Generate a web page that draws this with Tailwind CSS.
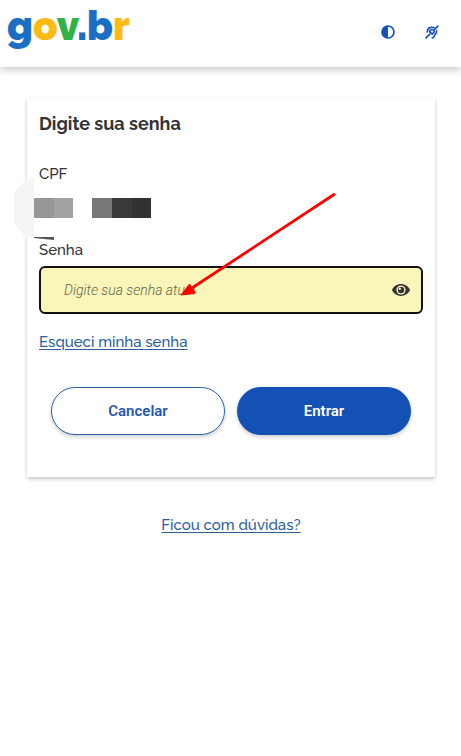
<!DOCTYPE html>
<html lang="pt-BR">
  <head>
    <meta charset="UTF-8" />
    <meta name="viewport" content="width=device-width, initial-scale=1.0" />
    <title>gov.br - Digite sua senha</title>
    <script src="https://cdn.jsdelivr.net/npm/@tailwindcss/browser@4"></script>
  </head>
  <body class="min-h-screen bg-white font-[Raleway,Lato,sans-serif] text-[#333]">
    <!-- Cabeçalho -->
    <header class="flex h-[67px] items-start justify-between bg-white pl-[7px] pr-[19px] shadow-[0_2px_8px_rgba(0,0,0,0.25)]">
      <a href="#" aria-label="gov.br" class="text-[40px] leading-[52px] font-black text-[#1a6fc4]"
        >g<span class="text-[#fdbb11]">o</span><span class="text-[#2fb344]">v</span>.b<span class="text-[#fdbb11]">r</span></a
      >
      <div class="flex gap-6 pt-[22px] text-[#1351b4]">
        <button type="button" aria-label="Alto contraste" class="flex size-5 items-center justify-center">
          <svg class="size-[14px]" viewBox="0 0 14 14" fill="none">
            <circle cx="7" cy="7" r="6" stroke="currentColor" stroke-width="1.7" />
            <path d="M7 1a6 6 0 0 0 0 12z" fill="currentColor" />
          </svg>
        </button>
        <button type="button" aria-label="Acessibilidade em Libras" class="flex size-5 items-center justify-center">
          <svg class="size-[14px]" viewBox="0 0 16 16" fill="none" stroke="currentColor" stroke-width="1.9" stroke-linecap="round">
            <path d="M1.200 14.800 5.500 10.500M11 5 14.800 1.200" />
            <path d="M2.600 8C2.800 4.800 5 2.700 8 2.700c.9 0 1.700.2 2.400.5M13.200 6.500c.5 2.300-.5 3.600-1.700 4.600-1.200 1-.6 3.400-3.200 3.600" />
            <path d="M5.400 8c0-1.700 1.200-2.600 2.600-2.600s2.600 1 2.600 2.400L9 9.500" />
            <path d="M6.300 8.500 8.300 10.500" />
          </svg>
        </button>
      </div>
    </header>

    <main class="pt-[31px] pr-[26px] pl-[27px]">
      <!-- Formulário de senha -->
      <form class="relative bg-white px-3 pt-3 pb-[42px] shadow-[0_2px_4px_rgba(0,0,0,0.22)]">
        <h1 class="text-lg leading-7 font-bold">Digite sua senha</h1>

        <p class="mt-6 text-[15px] leading-6 font-medium">CPF</p>

        <!-- CPF oculto -->
        <svg class="absolute top-20 -left-[13px] h-[60px] w-5" viewBox="0 0 20 60">
          <path d="M20 0 12 2 0 14v32l12 13 8 1z" fill="#f5f5f5" />
        </svg>
        <div class="-ml-[5px] mt-3 flex h-5">
          <span class="w-5 bg-[#979797]"></span>
          <span class="mr-[19px] w-[19px] bg-[#a3a3a3]"></span>
          <span class="w-5 bg-[#777]"></span>
          <span class="w-5 bg-[#393939]"></span>
          <span class="w-[19px] bg-[#323232]"></span>
        </div>
        <svg class="-ml-[5px] mt-[19px] block h-[3px] w-5" viewBox="0 0 20 3">
          <path d="M0 0h20v3L0 1z" fill="#555" />
        </svg>

        <label for="senha" class="block text-[15px] leading-5 font-medium">Senha</label>
        <div class="mt-[6px] flex h-12 items-center rounded-md border-2 border-[#111] bg-[#faf5b8] pr-[11px] pl-[23px]">
          <input
            type="password"
            id="senha"
            placeholder="Digite sua senha atual"
            class="h-full min-w-0 flex-1 font-[Roboto,sans-serif] text-sm placeholder:font-light placeholder:text-[#66654d] placeholder:italic focus:outline-none"
          />
          <button type="button" aria-label="Mostrar senha" class="text-[#333]">
            <svg class="h-3 w-[18px]" viewBox="0 0 18 12">
              <path
                d="M9 0C5 0 1.800 2.300.2 5.400a1.300 1.300 0 0 0 0 1.200C1.800 9.700 5 12 9 12s7.200-2.300 8.800-5.400a1.300 1.300 0 0 0 0-1.200C16.200 2.300 13 0 9 0z"
                fill="currentColor"
              />
              <circle cx="9" cy="6" r="4.600" fill="#faf5b8" />
              <circle cx="9" cy="6" r="3.200" fill="currentColor" />
              <circle cx="7.800" cy="4.700" r="1.200" fill="#faf5b8" />
            </svg>
          </button>
        </div>

        <a href="#" class="mt-4 inline-block text-[15px] leading-6 font-medium text-[#2c5f9e] underline underline-offset-2">Esqueci minha senha</a>

        <div class="mt-[33px] grid grid-cols-2 gap-3 px-3 font-[Roboto,sans-serif] text-[15px] font-semibold">
          <button
            type="button"
            class="h-12 rounded-full border border-[#2b62a8] bg-white text-[#1f58ae] shadow-[0_2px_4px_rgba(0,0,0,0.2)]"
          >
            Cancelar
          </button>
          <button type="submit" class="h-12 rounded-full bg-[#1351b4] text-white shadow-[0_2px_4px_rgba(0,0,0,0.2)]">Entrar</button>
        </div>

        <!-- Seta apontando para o campo -->
        <svg class="pointer-events-none absolute top-[94px] left-[153px] h-[106px] w-[158px]" viewBox="0 0 158 106">
          <path d="M154 2.500 12 96" stroke="#f00" stroke-width="2.800" stroke-linecap="round" />
          <path d="M1 103 9.500 92l6 9z" fill="#f00" stroke="#f00" stroke-width="1" />
        </svg>
      </form>

      <p class="mt-9 text-center">
        <a href="#" class="text-[15px] leading-6 font-medium text-[#2c5f9e] underline underline-offset-2">Ficou com dúvidas?</a>
      </p>
    </main>
  </body>
</html>
